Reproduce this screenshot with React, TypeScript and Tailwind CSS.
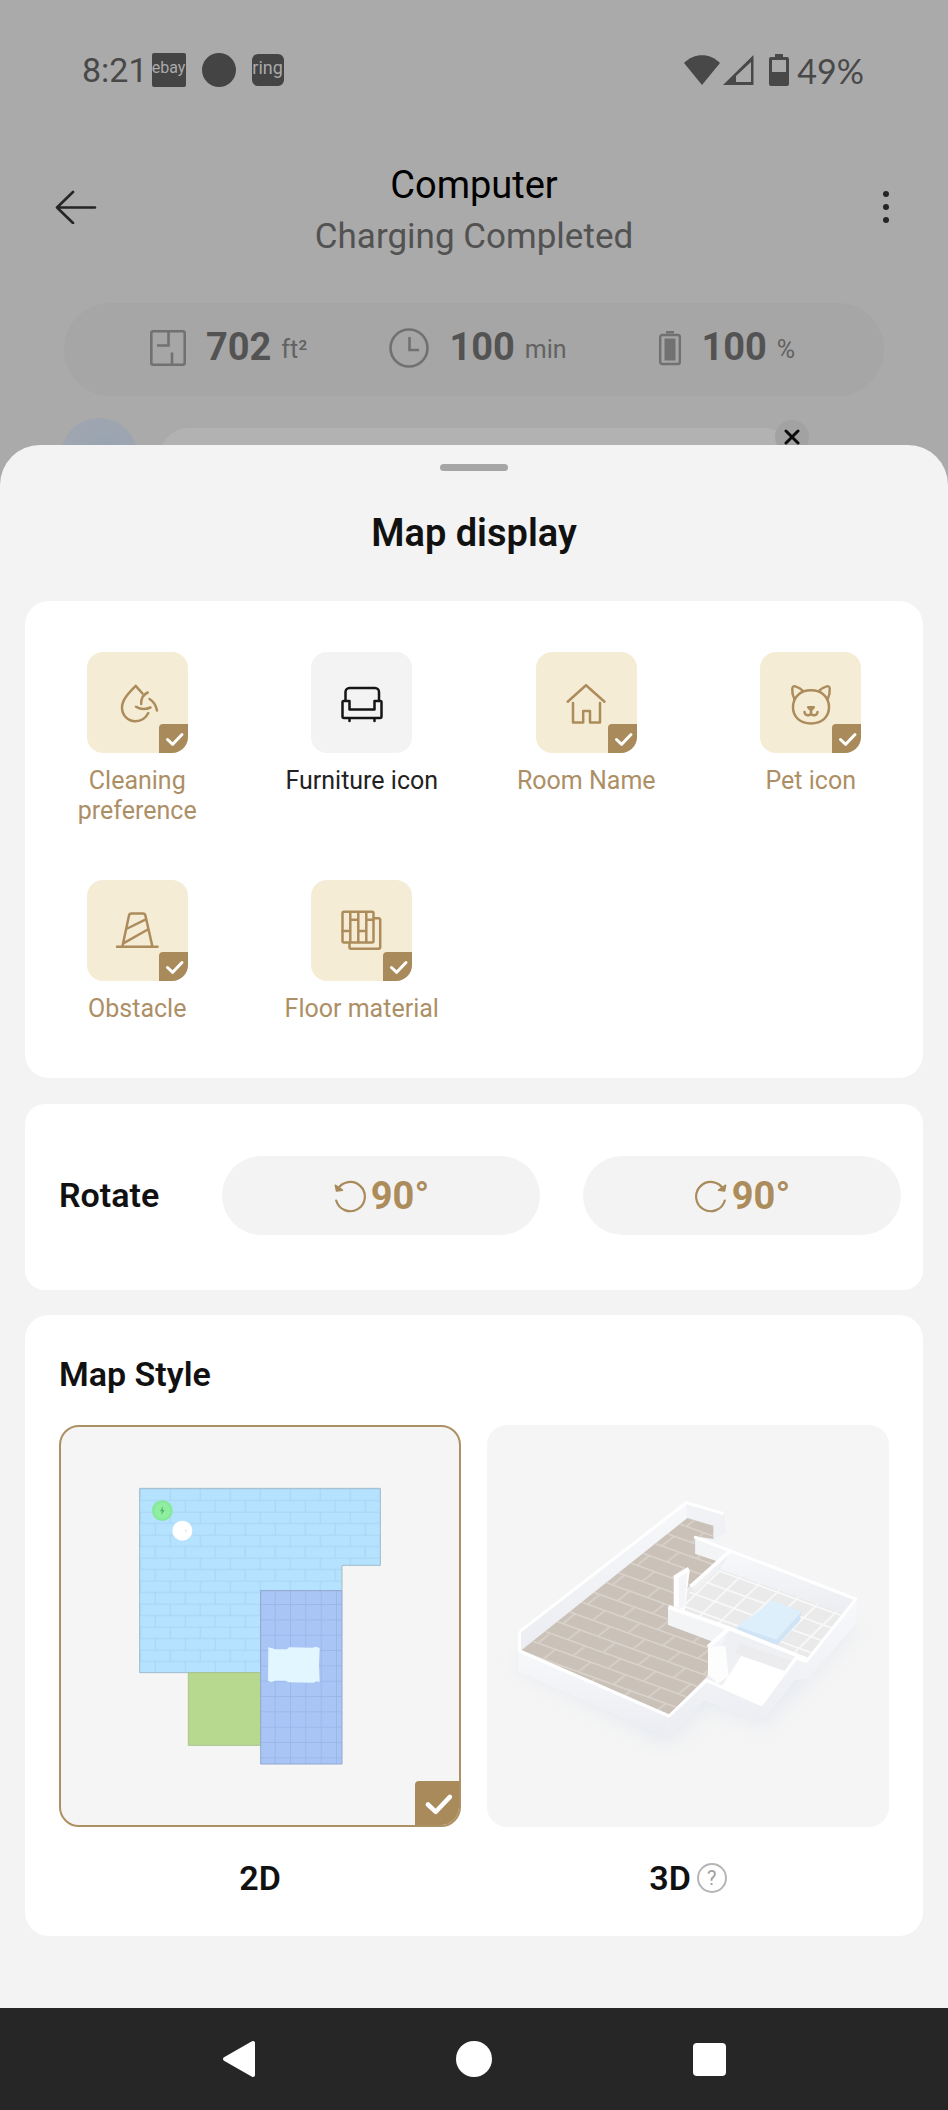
import { useState } from 'react';
import type { ReactNode } from 'react';
import clsx from 'clsx';

type Layer = {
  id: string;
  label: string;
  icon: ReactNode;
};

const layers: Layer[] = [
  {
    id: 'cleaning',
    label: 'Cleaning preference',
    icon: (
      <>
        <path d="M29.500 14.500 22.700 6.800C16 13.500 9 20.500 9 28.500c0 8 6 13.700 13.500 13.700 5.500 0 10.200-3 12.800-8.200" />
        <path d="M34.700 13.500c-4.500 2-6.700 5.500-6.500 11.500M36.500 20c4.200 2.500 6.500 6 7.500 11.500M23 27.700c4.500 2.800 9.500 3 14.500.8" />
      </>
    ),
  },
  {
    id: 'furniture',
    label: 'Furniture icon',
    icon: (
      <path d="M7.500 21.500V13a4 4 0 0 1 4-4h25.500a4 4 0 0 1 4 4v8.500M5.500 22h6v8.500h25V22h6a1 1 0 0 1 1 1v14.500a1.500 1.500 0 0 1-1.500 1.500H6a1.500 1.500 0 0 1-1.500-1.500V23a1 1 0 0 1 1-1zM11.500 39v3M36.500 39v3" />
    ),
  },
  {
    id: 'room',
    label: 'Room Name',
    icon: <path d="M5.700 22.700 24 6.200l18.500 16.500M11 24v19.600h10.200V32H28v11.600h10V24" />,
  },
  {
    id: 'pet',
    label: 'Pet icon',
    icon: (
      <>
        <path d="M24 11.300c11 0 18 7 18 17 0 10-7.500 16.200-18 16.200S6 38.300 6 28.300c0-10 7-17 18-17z" />
        <path d="M7.500 20.500C5.500 16.500 5 12.500 5.300 9.500c.2-2 1.500-2.500 3-2.100 3 .8 5.700 2.300 8 4.700M40.500 20.500c2-4 2.500-8 2.200-11-.2-2-1.500-2.500-3-2.100-3 .8-5.700 2.300-8 4.700" />
        <path d="M21.200 28.300h5.600L24 31.500zM24 31.500v2.700M17.500 33c.3 3.800 5.500 4.500 6.500 1.200 1 3.300 6.200 2.600 6.500-1.200" />
      </>
    ),
  },
  {
    id: 'obstacle',
    label: 'Obstacle',
    icon: (
      <path d="M9.500 39 16 8.500a2.500 2.500 0 0 1 2.400-2H30a2.500 2.500 0 0 1 2.400 2L39.300 39M4 39.700h40.500M14.300 21.500l17.500-8.700M10.300 36.300l24.500-13.800" />
    ),
  },
  {
    id: 'floor',
    label: 'Floor material',
    icon: (
      <>
        <rect x="4.500" y="4.700" width="31" height="30.800" rx="1.500" />
        <path d="M35.700 11.300h5a1.500 1.500 0 0 1 1.500 1.500v27.400a1.500 1.500 0 0 1-1.500 1.500H13a1.500 1.500 0 0 1-1.500-1.500v-4.500M12.300 5v30M20.300 5v30M28.300 5v30M4.500 24h7.800M12.300 12.700h8M20.300 24h8M28.300 12.700h7" />
      </>
    ),
  },
];

function CheckBadge({ className }: { className: string }) {
  return (
    <span className={clsx('absolute bg-[#a98a5b]', className)}>
      <svg viewBox="0 0 29 29" className="w-full h-full" fill="none" stroke="#fff" strokeWidth="3" strokeLinecap="round" strokeLinejoin="round">
        <path d="m8.500 15.500 5.200 4.800 9.300-9.800" />
      </svg>
    </span>
  );
}

function RotateIcon({ flipped }: { flipped?: boolean }) {
  return (
    <svg viewBox="0 0 34 34" className="w-[34px] h-[34px]" fill="none" stroke="#a98a5b" strokeWidth="2.200" strokeLinecap="round">
      <g transform={flipped ? 'matrix(-1 0 0 1 34 0)' : undefined}>
        <path d="M4.500 10.500A14.600 14.600 0 1 1 3.200 21.500" />
        <path d="M2.300 6.200 3.500 12l6-.8z" fill="#a98a5b" strokeLinejoin="round" strokeWidth="1.500" />
      </g>
    </svg>
  );
}

function FlatMap() {
  return (
    <svg viewBox="63 51 1194 1194" className="block w-full h-full">
      <defs>
        <pattern id="bricks" x="281" y="236" width="90" height="69" patternUnits="userSpaceOnUse">
          <path d="M0 1H90M0 35.500H90M20 1v34.500M65 35.500V69" stroke="#9dcdea" strokeWidth="2" />
        </pattern>
        <pattern id="grid" x="661" y="539" width="46" height="46" patternUnits="userSpaceOnUse">
          <path d="M0 45H46M45 0V46" stroke="#98b3e6" strokeWidth="2.500" />
        </pattern>
      </defs>
      <path d="M299 235H1021V466H906V542H662V788H299z" fill="#b5e2fe" />
      <path d="M299 235H1021V466H906V542H662V788H299z" fill="url(#bricks)" stroke="#9fbccb" strokeWidth="3" />
      <path d="M445 788H662V1006H445z" fill="#b7d88f" stroke="#a9c58c" strokeWidth="3" />
      <path d="M662 542H906V1062H662z" fill="#a9c5f6" />
      <path d="M662 542H906V1062H662z" fill="url(#grid)" stroke="#92a8cf" strokeWidth="3" />
      <path d="M685 712l12 3 10 3h34l6-6 70 1 10-3 12 4-2 50 2 52-10-2-8 4-75-1-10-5h-30l-12 4-10-3z" fill="#e2f6ff" />
      <circle cx="367" cy="302" r="31" fill="#84ea9a" />
      <circle cx="367" cy="302" r="24" fill="#90eea0" />
      <path d="M369 289l-9 15h6l-2 11 10-15h-6z" fill="#51b56c" />
      <circle cx="427" cy="362" r="30" fill="#fff" />
      <circle cx="438" cy="362" r="4" fill="#f0efef" />
    </svg>
  );
}

function IsoMap() {
  return (
    <svg viewBox="37 46 1206 1206" className="block w-full h-full">
      <defs>
        <filter id="soft" x="-20%" y="-20%" width="140%" height="140%">
          <feGaussianBlur stdDeviation="30" />
        </filter>
        <linearGradient id="wall" x1="0" y1="0" x2="0" y2="1">
          <stop offset="0" stopColor="#f7f8fa" />
          <stop offset="1" stopColor="#ebedf2" />
        </linearGradient>
        <pattern id="planks" width="112" height="94" patternUnits="userSpaceOnUse" patternTransform="matrix(.94 .34 -.79 .62 140 722)">
          <path d="M0 3H112M0 50H112M16 3v47M72 50v44" stroke="#d9d2ca" strokeWidth="6" />
        </pattern>
        <pattern id="tiles" width="62" height="50" patternUnits="userSpaceOnUse" patternTransform="matrix(.93 .34 -.72 .7 770 446)">
          <path d="M0 3H62M3 0V50" stroke="#f8f8f8" strokeWidth="6" />
        </pattern>
      </defs>
      <path d="M110 760 580 1010 700 890 870 950 1150 650 600 500z" fill="#e6eaf0" filter="url(#soft)" />

      {/* outer shell */}
      <path d="M132 665 635 275 750 310 752 375 725 392 772 415 1145 568 1145 640 1000 808 960 810 868 925 830 925 690 870 580 982 132 785z" fill="#f4f5f8" />
      <path d="M132 668 635 278 638 325 140 722z" fill="url(#wall)" />
      <path d="M635 278 748 312 720 352 638 325z" fill="#f1f2f5" />
      <path d="M716 348 750 312 752 372 716 388z" fill="#f0f1f4" />

      {/* wooden floor */}
      <path d="M140 722 638 325 716 348V388L662 380V432L728 455 645 528 600 590 580 600V645L712 695 698 800 583 917z" fill="#cac1b8" />
      <path d="M140 722 638 325 716 348V388L662 380V432L728 455 645 528 600 590 580 600V645L712 695 698 800 583 917z" fill="url(#planks)" />

      {/* tiled room */}
      <path d="M768 420 1145 568 995 755 600 600 648 528z" fill="#eaeaea" />
      <path d="M735 480 1110 600 995 755 600 600 648 545z" fill="url(#tiles)" />
      <path d="M768 425 1140 570 1105 612 735 478z" fill="url(#wall)" />
      <path d="M768 422 648 530 660 548 730 482z" fill="#f0f1f3" />
      <path d="M662 380 768 420 730 455 662 432z" fill="#f3f4f6" />
      <path d="M662 383 1143 568" stroke="#fff" strokeWidth="9" fill="none" strokeLinecap="round" />
      <path d="M768 422 648 530" stroke="#fff" strokeWidth="11" fill="none" />

      {/* bed */}
      <path d="M890 572 980 606 975 634 908 706 788 668V650L820 642z" fill="#d0e4f6" />
      <path d="M890 572 980 606 905 690 788 650 850 606z" fill="#deeffc" />

      {/* small room */}
      <path d="M760 660 965 740 860 885 695 815z" fill="#eff0f3" />
      <path d="M800 738 935 782 860 882 735 840z" fill="#fff" />
      <path d="M790 700 950 752 932 785 782 732z" fill="#ececef" />

      {/* partitions and door posts */}
      <path d="M580 590 762 655 712 695 580 645z" fill="#f3f4f6" />
      <path d="M582 592 764 656 995 748" stroke="#fff" strokeWidth="12" fill="none" />
      <path d="M764 656 700 712" stroke="#fff" strokeWidth="12" fill="none" />
      <path d="M597 498 640 472 645 484 630 602 597 590z" fill="#fff" />
      <path d="M612 505 638 488 630 592 612 598z" fill="#f5f5f7" />
      <path d="M700 712 752 708 762 800 730 822 700 795z" fill="#fdfdfe" />

      {/* front faces */}
      <path d="M132 725 583 920 580 982 132 785z" fill="url(#wall)" />
      <path d="M583 920 695 810 860 885 965 745 995 755 1145 570V635L1000 808H960L866 925H830L690 870 580 982z" fill="url(#wall)" />
      <path d="M135 666V724L583 919 696 812 860 885 964 745 995 755 1142 570" stroke="#fff" strokeWidth="9" fill="none" strokeLinejoin="round" />
      <path d="M135 666 635 279 746 312" stroke="#fff" strokeWidth="9" fill="none" />
    </svg>
  );
}

function StatusBar() {
  return (
    <div className="h-[140px] pl-[82px] pr-[84px] flex items-center justify-between text-[34px] text-[#484848]">
      <div className="flex items-center">
        <span>8:21</span>
        <span className="ml-1 w-[34px] h-[34px] rounded-xs bg-[#444] text-[#aaa] text-[16px] leading-[30px] flex justify-center">ebay</span>
        <span className="ml-4 w-[34px] h-[34px] rounded-full bg-[#444]" />
        <span className="ml-4 w-8 h-8 rounded-md bg-[#444] text-[#aaa] text-[18px] leading-[28px] flex justify-center">ring</span>
      </div>
      <div className="flex items-center">
        <svg viewBox="0 0 38 32" className="w-[38px] h-8" fill="#484848">
          <path d="M1 9C11-1.500 27-1.500 37 9L19 31z" />
        </svg>
        <svg viewBox="0 0 32 32" className="ml-0.5 w-8 h-8">
          <path d="M0 31 30.500 1V31z" fill="#484848" />
          <path d="M13 28V22L28 8V28z" fill="#aaa" />
        </svg>
        <svg viewBox="0 0 20 32" className="ml-3.5 w-5 h-8">
          <path d="M6 0h8v3h4a2 2 0 0 1 2 2v25a2 2 0 0 1-2 2H2a2 2 0 0 1-2-2V5a2 2 0 0 1 2-2h4z" fill="#484848" />
          <path d="M3 6h14v12H3z" fill="#aaa" />
        </svg>
        <span className="ml-2 font-[Lato,sans-serif]">49%</span>
      </div>
    </div>
  );
}

function Stat({ icon, value, unit }: { icon: ReactNode; value: string; unit: string }) {
  return (
    <div className="flex items-center justify-center">
      {icon}
      <span className="ml-5 text-[38px] font-bold text-[#535353]">{value}</span>
      <span className="ml-2.5 pt-1 text-[25px] text-[#626262]">{unit}</span>
    </div>
  );
}

export default function App() {
  const [enabled, setEnabled] = useState(['cleaning', 'room', 'pet', 'obstacle', 'floor']);
  const [mapStyle, setMapStyle] = useState('2D');

  function toggleLayer(id: string) {
    setEnabled((prev) => (prev.includes(id) ? prev.filter((x) => x !== id) : [...prev, id]));
  }

  return (
    <div className="min-h-screen flex flex-col bg-[#aaaaaa] font-[Roboto,sans-serif]">
      <StatusBar />

      <header className="mt-[19px] px-[55px] flex items-start justify-between">
        <button aria-label="Back" className="w-16 h-24 flex items-center">
          <svg viewBox="0 0 42 34" className="w-[42px] h-[34px]" fill="none" stroke="#252525" strokeWidth="2.600" strokeLinecap="round" strokeLinejoin="round">
            <path d="M18 2 2 17.500 18 33M2 17.500h38" />
          </svg>
        </button>
        <div className="text-center">
          <h1 className="text-[38px] leading-[52px] text-black">Computer</h1>
          <p className="text-[35px] leading-[52px] text-[#525252]">Charging Completed</p>
        </div>
        <button aria-label="More" className="w-16 h-24 pr-1 flex flex-col items-end justify-center gap-[7px]">
          <span className="w-1.5 h-1.5 rounded-full bg-[#252525]" />
          <span className="w-1.5 h-1.5 rounded-full bg-[#252525]" />
          <span className="w-1.5 h-1.5 rounded-full bg-[#252525]" />
        </button>
      </header>

      <div className="mt-10 mx-16 h-[93px] pl-10 pr-8 pb-1 rounded-full bg-[#a6a6a6] grid grid-cols-3">
        <Stat
          value="702"
          unit="ft²"
          icon={
            <svg viewBox="0 0 36 36" className="w-9 h-9" fill="none" stroke="#717171" strokeWidth="2.600">
              <rect x="1.300" y="1.300" width="33.400" height="33.400" rx="2" />
              <path d="M18.500 2v13.500H7M22 22.500V34" />
            </svg>
          }
        />
        <Stat
          value="100"
          unit="min"
          icon={
            <svg viewBox="0 0 40 40" className="w-10 h-10" fill="none" stroke="#717171" strokeWidth="2.600">
              <circle cx="20" cy="20" r="18.500" />
              <path d="M20.500 9v13H30" />
            </svg>
          }
        />
        <Stat
          value="100"
          unit="%"
          icon={
            <svg viewBox="0 0 22 36" className="w-[22px] h-9">
              <path d="M7 1h8v2.500H7zM5.500 8.500h11v22h-11z" fill="#717171" />
              <rect x="1.200" y="5" width="19.600" height="29" rx="2" fill="none" stroke="#717171" strokeWidth="2.400" />
            </svg>
          }
        />
      </div>

      <div className="mt-[22px] ml-[60px] mr-[155px] h-20 flex gap-[22px]">
        <div className="w-[78px] h-[78px] rounded-full bg-radial-[at_60%_40%] from-[#98a3b1] to-[#a5a8b0]" />
        <div className="relative mt-2.5 flex-1 rounded-t-[28px] bg-[#b2b2b2]">
          <button aria-label="Close" className="absolute -top-2 -right-4 w-[34px] h-[34px] rounded-full bg-[#a2a2a2] flex items-center justify-center">
            <svg viewBox="0 0 16 16" className="w-4 h-4" stroke="#0c0c0c" strokeWidth="3" strokeLinecap="round">
              <path d="m2 2 12 12M14 2 2 14" />
            </svg>
          </button>
        </div>
      </div>

      <main className="relative -mt-[53px] flex-1 rounded-t-[40px] bg-[#f3f3f3] px-[25px] pt-[19px] pb-[72px] text-[#111]">
        <div className="mx-auto w-[68px] h-[7px] rounded-full bg-[#a6a6a6]" />
        <h2 className="mt-9 text-center text-[38px] leading-[52px] font-semibold">Map display</h2>

        <section className="mt-[42px] pt-[51px] pb-[54px] rounded-3xl bg-white grid grid-cols-4 gap-y-[54px]">
          {layers.map((layer) => {
            const on = enabled.includes(layer.id);
            return (
              <label key={layer.id} className="flex flex-col items-center cursor-pointer">
                <input type="checkbox" className="sr-only" checked={on} onChange={() => toggleLayer(layer.id)} />
                <span
                  className={clsx(
                    'relative w-[101px] h-[101px] rounded-2xl flex items-center justify-center',
                    on ? 'bg-[#f5ecd6] text-[#ad8c5c]' : 'bg-[#f3f3f3] text-[#151515]'
                  )}
                >
                  <svg viewBox="0 0 48 48" className="w-12 h-12" fill="none" stroke="currentColor" strokeWidth="2.500" strokeLinecap="round" strokeLinejoin="round">
                    {layer.icon}
                  </svg>
                  {on && <CheckBadge className="right-0 bottom-0 w-[29px] h-[29px] rounded-tl-sm rounded-br-2xl" />}
                </span>
                <span className={clsx('mt-[13px] w-40 text-center text-[25px] leading-[30px]', on ? 'text-[#ad8f66]' : 'text-[#222]')}>
                  {layer.label}
                </span>
              </label>
            );
          })}
        </section>

        <section className="mt-[26px] pt-[52px] pb-[55px] pl-[34px] pr-[22px] rounded-[20px] bg-white flex items-center">
          <h3 className="w-[163px] text-[34px] font-semibold">Rotate</h3>
          <div className="flex-1 grid grid-cols-2 gap-[43px] text-[38px] font-bold text-[#ad8c5c]">
            <button className="h-[79px] rounded-full bg-[#f3f3f3] flex items-center justify-center gap-1">
              <RotateIcon />
              <span className="pt-0.5">90°</span>
            </button>
            <button className="h-[79px] rounded-full bg-[#f3f3f3] flex items-center justify-center gap-1">
              <RotateIcon flipped />
              <span className="pt-0.5">90°</span>
            </button>
          </div>
        </section>

        <section className="mt-[25px] pt-[39px] pb-[38px] px-[34px] rounded-3xl bg-white">
          <h3 className="text-[34px] leading-10 font-semibold">Map Style</h3>
          <div className="mt-[31px] grid grid-cols-2 gap-[26px]">
            {['2D', '3D'].map((style) => {
              const active = mapStyle === style;
              return (
                <div key={style}>
                  <label
                    className={clsx(
                      'relative block aspect-square rounded-[20px] bg-[#f5f5f5] overflow-hidden cursor-pointer',
                      active && 'border-2 border-[#ad9163]'
                    )}
                  >
                    <input
                      type="radio"
                      name="map-style"
                      aria-label={style}
                      className="sr-only"
                      checked={active}
                      onChange={() => setMapStyle(style)}
                    />
                    {style === '2D' ? <FlatMap /> : <IsoMap />}
                    {active && <CheckBadge className="right-0 bottom-0 w-11 h-11 rounded-tl-sm" />}
                  </label>
                  <div className="mt-[31px] h-10 flex items-center justify-center gap-1.5 text-[34px] leading-10 font-semibold">
                    {style}
                    {style === '3D' && (
                      <button aria-label="About 3D" className="w-[30px] h-[30px] rounded-full border-2 border-[#b5b5b5] text-[20px] leading-[26px] font-normal text-[#a0a0a0]">
                        ?
                      </button>
                    )}
                  </div>
                </div>
              );
            })}
          </div>
        </section>
      </main>

      <nav className="h-[102px] bg-[#262626] flex justify-center">
        <button aria-label="Back" className="w-[235px] flex items-center justify-center">
          <svg viewBox="0 0 34 38" className="w-[34px] h-[38px]" fill="#fff" stroke="#fff" strokeWidth="4" strokeLinejoin="round">
            <path d="M3 19 31 3v32z" />
          </svg>
        </button>
        <button aria-label="Home" className="w-[235px] flex items-center justify-center">
          <span className="w-9 h-9 rounded-full bg-white" />
        </button>
        <button aria-label="Recents" className="w-[235px] flex items-center justify-center">
          <span className="w-[33px] h-[33px] rounded-sm bg-white" />
        </button>
      </nav>
    </div>
  );
}
